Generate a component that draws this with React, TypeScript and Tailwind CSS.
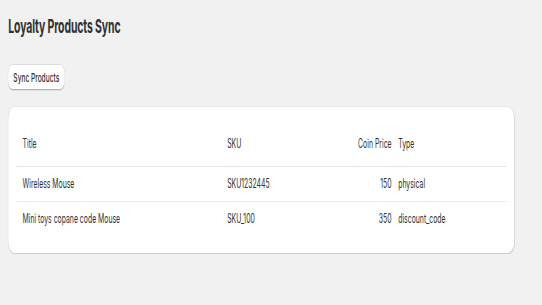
import React from "react";

const products = [
  { title: "Wireless Mouse", sku: "SKU1232445", price: 150, type: "physical" },
  { title: "Mini toys copane code Mouse", sku: "SKU_100", price: 350, type: "discount_code" },
];

export default function App() {
  return (
    <div className="min-h-screen overflow-hidden bg-[#f1f1f1] font-['Inter',sans-serif] text-[#303030]">
      {/* the whole page is drawn narrow, as in the reference */}
      <div className="w-[985px] origin-top-left scale-x-[0.55] px-[15px] pt-[15px]">
        <h1 className="text-[19px] font-bold leading-[24px] tracking-[-0.2px] text-[#303030]">
          Loyalty Products Sync
        </h1>

        <button
          type="button"
          className="mt-[26px] h-[25px] w-[102px] rounded-[8px] bg-white text-[12px] font-medium text-[#303030] shadow-[inset_0_-1px_0_#b5b5b5,0_0_0_1px_rgba(0,0,0,0.08)]"
        >
          Sync Products
        </button>

        <div className="mt-[17px] w-[920px] rounded-[12px] bg-white px-[14px] pt-[16px] pb-[16px] shadow-[0_1px_1px_rgba(0,0,0,0.12),0_0_0_1px_rgba(0,0,0,0.04)]">
          <div className="grid grid-cols-[384px_1fr_140px_203px] text-[12.5px] text-[#333333]">
            <div className="flex h-[44px] items-center border-b border-[#e6e6e6] pl-[12px]">Title</div>
            <div className="flex h-[44px] items-center border-b border-[#e6e6e6]">SKU</div>
            <div className="flex h-[44px] items-center justify-end border-b border-[#e6e6e6] pr-[6px]">Coin Price</div>
            <div className="flex h-[44px] items-center border-b border-[#e6e6e6] pl-[6px]">Type</div>

            {products.map((p, i) => {
              const row = i < products.length - 1 ? "border-b border-[#ececec]" : "";
              return (
                <React.Fragment key={p.sku}>
                  <div className={`flex h-[35px] items-center pl-[12px] ${row}`}>{p.title}</div>
                  <div className={`flex h-[35px] items-center ${row}`}>{p.sku}</div>
                  <div className={`flex h-[35px] items-center justify-end pr-[6px] ${row}`}>{p.price}</div>
                  <div className={`flex h-[35px] items-center pl-[6px] ${row}`}>{p.type}</div>
                </React.Fragment>
              );
            })}
          </div>
        </div>
      </div>
    </div>
  );
}
